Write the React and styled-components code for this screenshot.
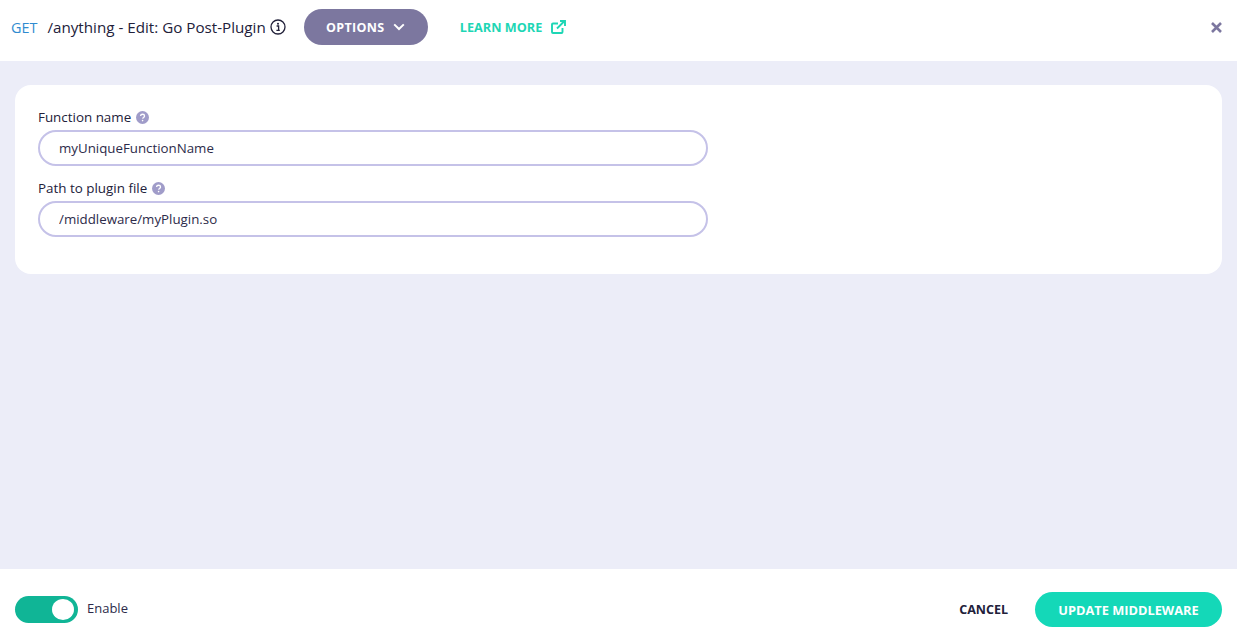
import React from "react";
import styled, { createGlobalStyle } from "styled-components";

const GlobalStyle = createGlobalStyle`
  html, body {
    margin: 0;
    padding: 0;
    height: 100%;
    font-family: "Open Sans", "Liberation Sans", sans-serif;
    -webkit-font-smoothing: antialiased;
  }
`;

const Page = styled.div`
  width: 100%;
  height: 643px;
  display: flex;
  flex-direction: column;
  background-color: #ecedf8;
  overflow: hidden;
`;

const Header = styled.header`
  height: 61px;
  box-sizing: border-box;
  display: flex;
  align-items: center;
  padding: 0 14px 7px 11px;
  background-color: white;
  flex-shrink: 0;
`;

const Method = styled.span`
  color: #2f8bd0;
  font-size: 14.4px;
  margin-right: 10px;
`;

const Title = styled.span`
  color: #22213a;
  font-size: 15.2px;
`;

const InfoIcon = styled.svg`
  width: 16px;
  height: 16px;
  margin-left: 4px;
  color: #22213a;
`;

const OptionsButton = styled.button`
  width: 124px;
  height: 36px;
  margin-left: 18px;
  border: none;
  border-radius: 18px;
  background-color: #7c779f;
  color: white;
  font-family: inherit;
  font-size: 12.5px;
  font-weight: 700;
  letter-spacing: 0.3px;
  display: flex;
  align-items: center;
  justify-content: center;
  gap: 9px;
`;

const LearnMore = styled.a`
  margin-left: 32px;
  color: #1ed6b5;
  font-size: 12.7px;
  font-weight: 700;
  display: flex;
  align-items: center;
  gap: 9px;
  text-decoration: none;
`;

const CloseButton = styled.button`
  margin-left: auto;
  padding: 0;
  border: none;
  background: none;
  color: #7c779f;
  display: flex;
`;

const Content = styled.main`
  flex: 1;
  padding: 24px 15px;
`;

const Card = styled.section`
  height: 189px;
  box-sizing: border-box;
  padding: 23px 23px 0;
  border-radius: 16px;
  background-color: white;
`;

const Field = styled.div`
  width: 670px;
  margin-bottom: 13px;
`;

const Label = styled.label`
  display: flex;
  align-items: center;
  gap: 5px;
  height: 18px;
  margin-bottom: 4px;
  color: #22213a;
  font-size: 13.4px;
`;

const HelpIcon = styled.svg`
  width: 13px;
  height: 13px;
  color: #a09cc9;
`;

const Input = styled.input`
  width: 100%;
  height: 36px;
  box-sizing: border-box;
  padding: 0 19px;
  border: 2px solid #c5c2e8;
  border-radius: 18px;
  outline: none;
  background-color: white;
  color: #2d2b4a;
  font-family: inherit;
  font-size: 13.3px;
`;

const Footer = styled.footer`
  height: 74px;
  box-sizing: border-box;
  flex-shrink: 0;
  display: flex;
  align-items: center;
  padding: 7px 15px 0;
  background-color: white;
`;

const Toggle = styled.div`
  width: 63px;
  height: 27px;
  box-sizing: border-box;
  padding: 3px 4px;
  border-radius: 14px;
  background-color: #10b596;
  display: flex;
  justify-content: flex-end;
`;

const Knob = styled.span`
  width: 22px;
  height: 21px;
  border-radius: 50%;
  background-color: white;
`;

const ToggleLabel = styled.span`
  margin-left: 9px;
  margin-bottom: 3px;
  color: #2d2b4a;
  font-size: 13px;
`;

const CancelButton = styled.button`
  margin-left: auto;
  padding: 0;
  border: none;
  background: none;
  color: #22213a;
  font-family: inherit;
  font-size: 12.5px;
  font-weight: 700;
`;

const SaveButton = styled.button`
  width: 187px;
  height: 35px;
  margin-left: 27px;
  border: none;
  border-radius: 18px;
  background-color: #14d8b8;
  color: white;
  font-family: inherit;
  font-size: 12.8px;
  font-weight: 700;
`;

const Help = () => (
  <HelpIcon viewBox="0 0 16 16">
    <circle cx="8" cy="8" r="8" fill="currentColor" />
    <path d="M5.6 6.2C5.7 4.8 6.7 4 8.1 4c1.4 0 2.4.8 2.4 2 0 1-.6 1.5-1.3 2-.6.4-.8.7-.8 1.4" fill="none" stroke="white" strokeWidth="1.6" />
    <circle cx="8.1" cy="11.8" r="1" fill="white" />
  </HelpIcon>
);

const App = () => {
  return (
    <Page>
      <GlobalStyle />
      <Header>
        <Method>GET</Method>
        <Title>/anything - Edit: Go Post-Plugin</Title>
        <InfoIcon viewBox="0 0 16 16">
          <circle cx="8" cy="8" r="7" fill="none" stroke="currentColor" strokeWidth="1.3" />
          <circle cx="8" cy="4.8" r="1" fill="currentColor" />
          <path d="M6.6 7h2v4.2M6.4 11.4h3.4" fill="none" stroke="currentColor" strokeWidth="1.3" />
        </InfoIcon>
        <OptionsButton>
          OPTIONS
          <svg width="12" height="8" viewBox="0 0 12 8">
            <path d="M1.2 1.4 6 6l4.8-4.6" fill="none" stroke="white" strokeWidth="2" />
          </svg>
        </OptionsButton>
        <LearnMore href="#!">
          LEARN MORE
          <svg width="15" height="14" viewBox="0 0 15 14">
            <path d="M11.5 8v4a1 1 0 0 1-1 1H2a1 1 0 0 1-1-1V4.5a1 1 0 0 1 1-1h5" fill="none" stroke="#1ed6b5" strokeWidth="1.9" />
            <path d="M6 8.5 13 1.5M9 1h5v5" fill="none" stroke="#1ed6b5" strokeWidth="1.9" />
          </svg>
        </LearnMore>
        <CloseButton>
          <svg width="13" height="13" viewBox="0 0 13 13">
            <path d="M2 2l9 9M11 2l-9 9" fill="none" stroke="currentColor" strokeWidth="2.6" />
          </svg>
        </CloseButton>
      </Header>
      <Content>
        <Card>
          <Field>
            <Label>Function name <Help /></Label>
            <Input defaultValue="myUniqueFunctionName" />
          </Field>
          <Field>
            <Label>Path to plugin file <Help /></Label>
            <Input defaultValue="/middleware/myPlugin.so" />
          </Field>
        </Card>
      </Content>
      <Footer>
        <Toggle><Knob /></Toggle>
        <ToggleLabel>Enable</ToggleLabel>
        <CancelButton>CANCEL</CancelButton>
        <SaveButton>UPDATE MIDDLEWARE</SaveButton>
      </Footer>
    </Page>
  );
};

export default App;
